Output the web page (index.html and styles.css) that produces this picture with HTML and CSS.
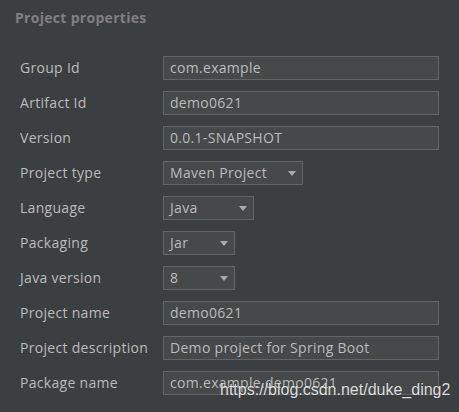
FILE: index.html
```html
<!DOCTYPE html>
<html>
<head>
<meta charset="utf-8">
<link rel="stylesheet" href="styles.css">
</head>
<body>
<div class="panel">
  <div class="title">Project properties</div>
  <div class="rows">
    <div class="row"><span class="label">Group Id</span><div class="field">com.example</div></div>
    <div class="row"><span class="label">Artifact Id</span><div class="field">demo0621</div></div>
    <div class="row"><span class="label">Version</span><div class="field">0.0.1-SNAPSHOT</div></div>
    <div class="row"><span class="label">Project type</span><div class="combo w-maven"><span>Maven Project</span><span class="arrow"></span></div></div>
    <div class="row"><span class="label">Language</span><div class="combo w-java"><span>Java</span><span class="arrow"></span></div></div>
    <div class="row"><span class="label">Packaging</span><div class="combo w-small"><span>Jar</span><span class="arrow"></span></div></div>
    <div class="row"><span class="label">Java version</span><div class="combo w-small"><span>8</span><span class="arrow"></span></div></div>
    <div class="row"><span class="label">Project name</span><div class="field">demo0621</div></div>
    <div class="row"><span class="label">Project description</span><div class="field">Demo project for Spring Boot</div></div>
    <div class="row"><span class="label">Package name</span><div class="field">com.example.demo0621</div></div>
  </div>
  <div class="watermark">https://blog.csdn.net/duke_ding2</div>
</div>
</body>
</html>
```
FILE: styles.css
```css
html, body {
  margin: 0;
  padding: 0;
  background: #3c3f41;
}
body {
  width: 459px;
  height: 412px;
  overflow: hidden;
  font-family: "Open Sans", "Noto Sans", "DejaVu Sans", sans-serif;
  font-size: 14px;
  letter-spacing: 0.3px;
  color: #bbbbbb;
}
.panel {
  position: relative;
  padding: 9px 20px 0 20px;
  height: 412px;
  box-sizing: border-box;
}
.title {
  margin-left: -5px;
  line-height: 18px;
  font-weight: bold;
  color: #808080;
}
.rows {
  margin-top: 29px;
  display: flex;
  flex-direction: column;
  gap: 11px;
}
.row {
  display: flex;
  align-items: center;
  height: 24px;
}
.label {
  width: 143px;
  flex: none;
  line-height: 24px;
}
.field, .combo {
  box-sizing: border-box;
  height: 24px;
  border: 1px solid #626567;
  background: #45494a;
  padding: 0 6px;
  line-height: 22px;
  white-space: nowrap;
}
.field {
  width: 276px;
}
.combo {
  display: flex;
  align-items: center;
  justify-content: space-between;
  padding-right: 6px;
}
.w-maven { width: 140px; }
.w-java { width: 91px; }
.w-small { width: 72px; }
.arrow {
  width: 0;
  height: 0;
  border-left: 4.5px solid transparent;
  border-right: 4.5px solid transparent;
  border-top: 5px solid #a9abad;
  margin-top: 1px;
}
.watermark {
  position: absolute;
  left: 220px;
  top: 380px;
  font-family: "Liberation Sans", Arial, sans-serif;
  font-size: 16px;
  line-height: 20px;
  letter-spacing: 0;
  color: rgba(255, 255, 255, 0.85);
  text-shadow: 0 0 1px rgba(0, 0, 0, 0.4);
}
```
